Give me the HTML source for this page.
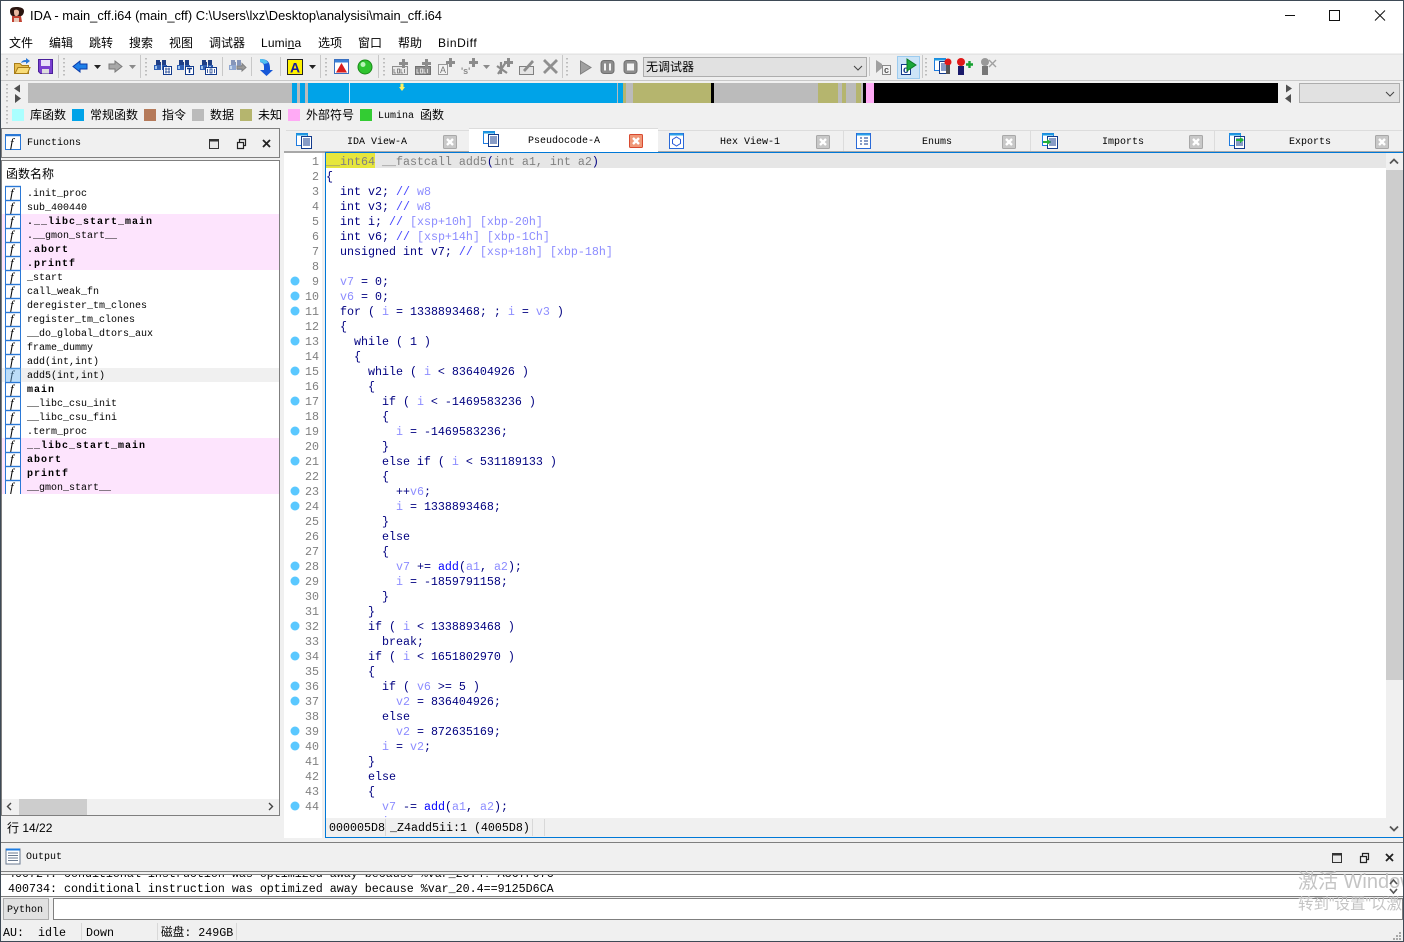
<!DOCTYPE html>
<html><head><meta charset="utf-8"><title>IDA</title>
<style>
html,body{margin:0;padding:0;width:1404px;height:942px;overflow:hidden;background:#f0f0f0}
body{position:relative;font-family:"Liberation Sans","Noto Sans CJK SC",sans-serif;font-size:12px;color:#000}
.a{position:absolute;white-space:pre}
.cjk{font-family:"Liberation Sans","Noto Sans CJK SC",sans-serif;font-size:12px;line-height:16px}
.m{font-family:"Liberation Mono","Noto Sans CJK SC",monospace}
.t10{font-size:10px;line-height:14px}
.code{font-family:"Liberation Mono",monospace;font-size:11.67px;line-height:15px;color:#000080}
.code i{font-style:normal;color:#8c8cff}
.code u{text-decoration:none;color:#4646ff}
.code b{font-weight:normal;color:#0000ff}
.code s{text-decoration:none;color:#808080}
.ln{font-family:"Liberation Mono",monospace;font-size:11.67px;line-height:15px;color:#808080;text-align:right;white-space:pre}
.f{font-family:"Liberation Mono",monospace;font-size:10px;line-height:14px;white-space:pre}
.f b{font-weight:bold;letter-spacing:1px}
.sw{position:absolute;top:109px;width:12px;height:12px}
.seg{position:absolute;top:83px;height:20px}
svg{position:absolute;left:0;top:0}
</style></head>
<body>
<!-- title + menu -->
<div class="a" style="left:0;top:0;width:1404px;height:53px;background:#fff"></div>
<div class="a" style="left:30px;top:8px;font-size:12.9px;line-height:16px">IDA - main_cff.i64 (main_cff) C:\Users\lxz\Desktop\analysisi\main_cff.i64</div>
<div class="a cjk" style="left:9px;top:35px">文件</div>
<div class="a cjk" style="left:49px;top:35px">编辑</div>
<div class="a cjk" style="left:89px;top:35px">跳转</div>
<div class="a cjk" style="left:129px;top:35px">搜索</div>
<div class="a cjk" style="left:169px;top:35px">视图</div>
<div class="a cjk" style="left:209px;top:35px">调试器</div>
<div class="a cjk" style="left:261px;top:35px;letter-spacing:.15px">Lumi<span style="text-decoration:underline">n</span>a</div>
<div class="a cjk" style="left:318px;top:35px">选项</div>
<div class="a cjk" style="left:358px;top:35px">窗口</div>
<div class="a cjk" style="left:398px;top:35px">帮助</div>
<div class="a cjk" style="left:438px;top:35px;letter-spacing:.6px">BinDiff</div>
<!-- toolbar -->
<div class="a" style="left:1px;top:54px;width:1402px;height:25px;background:#efefef;border-top:1px solid #e4e4e4;border-bottom:1px solid #c8c8c8"></div>
<div class="a" style="left:643px;top:57px;width:222px;height:18px;background:#e1e1e1;border:1px solid #adadad"></div>
<div class="a cjk" style="left:646px;top:59px">无调试器</div>
<div class="a" style="left:897px;top:56px;width:21px;height:21px;background:#cce4f7;border:1px solid #9ccbef"></div>
<!-- nav -->
<div class="seg" style="left:28px;width:1250px;background:#bbb"></div>
<div class="seg" style="left:292px;width:5px;background:#00a3e8"></div>
<div class="seg" style="left:300px;width:5px;background:#00a3e8"></div>
<div class="seg" style="left:308px;width:309px;background:#00a3e8"></div>
<div class="seg" style="left:349px;width:1px;background:#cfe8f5"></div>
<div class="seg" style="left:618px;width:5px;background:#00a3e8"></div>
<div class="seg" style="left:623px;width:3px;background:#b5b56e"></div>
<div class="seg" style="left:633px;width:78px;background:#b5b56e"></div>
<div class="seg" style="left:711px;width:3px;background:#000"></div>
<div class="seg" style="left:818px;width:20px;background:#b5b56e"></div>
<div class="seg" style="left:842px;width:4px;background:#b5b56e"></div>
<div class="seg" style="left:856px;width:5px;background:#b5b56e"></div>
<div class="seg" style="left:863px;width:3px;background:#000"></div>
<div class="seg" style="left:866px;width:8px;background:#ffaaf5"></div>
<div class="seg" style="left:874px;width:404px;background:#000"></div>
<div class="a" style="left:1299px;top:83px;width:99px;height:18px;background:#e1e1e1;border:1px solid #adadad"></div>
<!-- legend -->
<div class="sw" style="left:12px;background:#aaffff"></div><div class="a cjk" style="left:30px;top:107px">库函数</div>
<div class="sw" style="left:72px;background:#00a3e8"></div><div class="a cjk" style="left:90px;top:107px">常规函数</div>
<div class="sw" style="left:144px;background:#b57a5a"></div><div class="a cjk" style="left:162px;top:107px">指令</div>
<div class="sw" style="left:192px;background:#bbb"></div><div class="a cjk" style="left:210px;top:107px">数据</div>
<div class="sw" style="left:240px;background:#b5b56e"></div><div class="a cjk" style="left:258px;top:107px">未知</div>
<div class="sw" style="left:288px;background:#ffaaf5"></div><div class="a cjk" style="left:306px;top:107px">外部符号</div>
<div class="sw" style="left:360px;background:#33cc33"></div><div class="a m t10" style="left:378px;top:110px">Lumina</div><div class="a cjk" style="left:420px;top:107px">函数</div>

<!-- left panel -->
<div class="a" style="left:1px;top:128px;width:277px;height:28px;border:1px solid #7f7f7f;background:#f0f0f0"></div>
<div class="a m t10" style="left:27px;top:137px">Functions</div>
<div class="a" style="left:1px;top:160px;width:277px;height:654px;border:1px solid #7f7f7f;background:#fff"></div>
<div class="a cjk" style="left:6px;top:166px">函数名称</div>
<div class="a" style="left:2px;top:214px;width:277px;height:56px;background:#fde4fd"></div>
<div class="a" style="left:2px;top:368px;width:277px;height:14px;background:#f0f0f0"></div>
<div class="a" style="left:2px;top:438px;width:277px;height:56px;background:#fde4fd"></div>
<div class="a f" style="left:27px;top:188px">.init_proc
sub_400440
<b>.__libc_start_main</b>
.__gmon_start__
<b>.abort</b>
<b>.printf</b>
_start
call_weak_fn
deregister_tm_clones
register_tm_clones
__do_global_dtors_aux
frame_dummy
add(int,int)
add5(int,int)
<b>main</b>
__libc_csu_init
__libc_csu_fini
.term_proc
<b>__libc_start_main</b>
<b>abort</b>
<b>printf</b>
__gmon_start__</div>
<div class="a" style="left:2px;top:799px;width:277px;height:16px;background:#f0f0f0"></div>
<div class="a" style="left:19px;top:799px;width:68px;height:16px;background:#cdcdcd"></div>
<div class="a cjk" style="left:7px;top:820px">行 14/22</div>

<!-- tabs -->
<div class="a" style="left:286px;top:130px;width:1116px;height:21px;background:#f0f0f0;border-top:1px solid #dcdcdc"></div>
<div class="a" style="left:284px;top:151px;width:1120px;height:1px;background:#a8a8a8"></div>
<div class="a" style="left:469px;top:128px;width:189px;height:24px;background:#fff;border-top:1px solid #dcdcdc"></div>
<div class="a" style="left:843px;top:131px;width:1px;height:20px;background:#dcdcdc"></div>
<div class="a" style="left:1030px;top:131px;width:1px;height:20px;background:#dcdcdc"></div>
<div class="a" style="left:1214px;top:131px;width:1px;height:20px;background:#dcdcdc"></div>
<div class="a m t10" style="left:347px;top:136px">IDA View-A</div>
<div class="a m t10" style="left:528px;top:135px">Pseudocode-A</div>
<div class="a m t10" style="left:720px;top:136px">Hex View-1</div>
<div class="a m t10" style="left:922px;top:136px">Enums</div>
<div class="a m t10" style="left:1102px;top:136px">Imports</div>
<div class="a m t10" style="left:1289px;top:136px">Exports</div>

<!-- code pane -->
<div class="a" style="left:326px;top:152px;width:1078px;height:1px;background:#0078d7"></div>
<div class="a" style="left:284px;top:152px;width:41px;height:1px;background:#a8a8a8"></div>
<div class="a" style="left:284px;top:153px;width:38px;height:685px;background:#fff"></div>
<div class="a" style="left:325px;top:152px;width:1px;height:686px;background:#0078d7"></div>
<div class="a" style="left:326px;top:153px;width:1077px;height:665px;background:#fff"></div>
<div class="a" style="left:326px;top:153px;width:1060px;height:15px;background:#e6e6e6"></div>
<div class="a" style="left:326px;top:153px;width:49px;height:15px;background:#e6e63c"></div>
<div class="a" style="left:1386px;top:153px;width:17px;height:684px;background:#f0f0f0"></div>
<div class="a" style="left:1386px;top:170px;width:17px;height:510px;background:#cdcdcd"></div>
<div class="a" style="left:326px;top:818px;width:1060px;height:19px;background:#f0f0f0"></div>
<div class="a" style="left:326px;top:837px;width:1078px;height:1px;background:#0078d7"></div>
<div class="a" style="left:1403px;top:152px;width:1px;height:686px;background:#0078d7"></div>
<div class="a" style="left:385px;top:819px;width:1px;height:17px;background:#d8d8d8"></div>
<div class="a" style="left:532px;top:819px;width:1px;height:17px;background:#d8d8d8"></div>
<div class="a" style="left:544px;top:819px;width:1px;height:17px;background:#d8d8d8"></div>
<div class="a m" style="left:329px;top:821px;font-size:11.67px;line-height:15px;color:#000">000005D8</div>
<div class="a m" style="left:390px;top:821px;font-size:11.67px;line-height:15px;color:#000">_Z4add5ii:1 (4005D8)</div>

<div class="a ln" style="left:284px;top:155px;width:35px;height:663px;overflow:hidden">1
2
3
4
5
6
7
8
9
10
11
12
13
14
15
16
17
18
19
20
21
22
23
24
25
26
27
28
29
30
31
32
33
34
35
36
37
38
39
40
41
42
43
44</div>
<div class="a code" style="left:326px;top:155px;width:1060px;height:663px;overflow:hidden"><s>__int64 __fastcall add5</s>(<s>int a1, int a2</s>)
{
  int v2; <u>//</u> <i>w8</i>
  int v3; <u>//</u> <i>w8</i>
  int i; <u>//</u> <i>[xsp+10h] [xbp-20h]</i>
  int v6; <u>//</u> <i>[xsp+14h] [xbp-1Ch]</i>
  unsigned int v7; <u>//</u> <i>[xsp+18h] [xbp-18h]</i>

  <i>v7</i> = 0;
  <i>v6</i> = 0;
  for ( <i>i</i> = 1338893468; ; <i>i</i> = <i>v3</i> )
  {
    while ( 1 )
    {
      while ( <i>i</i> &lt; 836404926 )
      {
        if ( <i>i</i> &lt; -1469583236 )
        {
          <i>i</i> = -1469583236;
        }
        else if ( <i>i</i> &lt; 531189133 )
        {
          ++<i>v6</i>;
          <i>i</i> = 1338893468;
        }
        else
        {
          <i>v7</i> += <b>add</b>(<i>a1</i>, <i>a2</i>);
          <i>i</i> = -1859791158;
        }
      }
      if ( <i>i</i> &lt; 1338893468 )
        break;
      if ( <i>i</i> &lt; 1651802970 )
      {
        if ( <i>v6</i> &gt;= 5 )
          <i>v2</i> = 836404926;
        else
          <i>v2</i> = 872635169;
        <i>i</i> = <i>v2</i>;
      }
      else
      {
        <i>v7</i> -= <b>add</b>(<i>a1</i>, <i>a2</i>);
        <i>i</i></div>

<!-- output -->
<div class="a" style="left:0;top:842px;width:1403px;height:28px;border-top:1px solid #7f7f7f;border-bottom:1px solid #7f7f7f;background:#f0f0f0"></div>
<div class="a m t10" style="left:26px;top:851px;font-size:10px">Output</div>
<div class="a" style="left:0;top:874px;width:1403px;height:21px;border-top:1px solid #7f7f7f;border-bottom:1px solid #7f7f7f;background:#fff;overflow:hidden">
<div class="a code" style="left:8px;top:-8px;color:#000">400724: conditional instruction was optimized away because %var_20.4!=A867F07C
400734: conditional instruction was optimized away because %var_20.4==9125D6CA</div></div>
<div class="a" style="left:3px;top:898px;width:44px;height:20px;background:#e1e1e1;border:1px solid #adadad"></div>
<div class="a m t10" style="left:7px;top:904px">Python</div>
<div class="a" style="left:53px;top:898px;width:1348px;height:20px;background:#fff;border:1px solid #7f7f7f"></div>
<div class="a m" style="left:3px;top:926px;font-size:11.67px;line-height:14px">AU:  idle</div>
<div class="a m" style="left:86px;top:926px;font-size:11.67px;line-height:14px">Down</div>
<div class="a m" style="left:161px;top:926px;font-size:11.67px;line-height:14px">磁盘: 249GB</div>
<div class="a" style="left:81px;top:923px;width:1px;height:17px;background:#d8d8d8"></div>
<div class="a" style="left:157px;top:923px;width:1px;height:17px;background:#d8d8d8"></div>
<div class="a" style="left:236px;top:923px;width:1px;height:17px;background:#d8d8d8"></div>
<!-- watermark -->
<div class="a" style="left:1298px;top:869px;width:106px;overflow:hidden;font-size:20px;line-height:26px;color:#c4c4c4;font-family:'Liberation Sans','Noto Sans CJK SC',sans-serif">激活 Windows</div>
<div class="a" style="left:1298px;top:896px;width:106px;overflow:hidden;font-size:15.5px;line-height:18px;color:#c4c4c4;font-family:'Liberation Sans','Noto Sans CJK SC',sans-serif">转到"设置"以激活</div>

<svg width="1404" height="942" viewBox="0 0 1404 942" fill="none">
<defs>
<symbol id="fn" viewBox="0 0 16 14" width="16" height="14" overflow="visible">
<rect width="16" height="14" fill="#fff"/>
<path d="M.5 0V14M15.5 0V14" stroke="#2a78d6"/><path d="M0 .5H16" stroke="#2a78d6" stroke-width="1.4"/>
<text x="5" y="11.5" font-family="Liberation Serif" font-style="italic" font-size="13" fill="#000">f</text>
</symbol>
<symbol id="doc" viewBox="0 0 16 16" width="16" height="16" overflow="visible">
<rect x=".5" y=".5" width="11" height="12" fill="#fff" stroke="#1d7be0"/><path d="M0 1.5H12" stroke="#1d9be0" stroke-width="2"/>
<rect x="5.5" y="3.5" width="10" height="12" fill="#fff" stroke="#123a8c"/><path d="M7 6H14M7 8H14M7 10H14M7 12H14" stroke="#123a8c"/>
</symbol>
<symbol id="cl" viewBox="0 0 14 14" width="14" height="14" overflow="visible">
<rect x=".5" y=".5" width="13" height="13" rx="1" fill="#c8c8c8" stroke="#a8a8a8"/><path d="M4 4L10 10M10 4L4 10" stroke="#fff" stroke-width="2.4"/>
</symbol>
<symbol id="bin" viewBox="0 0 18 18" width="18" height="18" overflow="visible">
<path d="M2 2H6V4H7V7H2ZM8 2H12V7H8Z" fill="#1f3f86"/><path d="M0 7H7V12H0ZM8 7H13V12H8Z" fill="#2f5fb4"/><path d="M1 8h2v3H1zM9 8h2v3H9z" fill="#9fc4ee"/>
</symbol>
<symbol id="plus" viewBox="0 0 8 8" width="8" height="8" overflow="visible"><path d="M3 0H6V3H9V6H6V9H3V6H0V3H3Z" fill="#8c8c8c"/></symbol>
<symbol id="grip" viewBox="0 0 3 20" width="3" height="20" overflow="visible">
<path d="M0 1h2v1.5H0zM0 5h2v1.5H0zM0 9h2v1.5H0zM0 13h2v1.5H0zM0 17h2v1.5H0z" fill="#bdbdbd"/>
</symbol>
</defs>
<!-- window border -->
<rect x=".5" y=".5" width="1403" height="941" stroke="#3e4a56"/>
<!-- title icon -->
<path d="M10 11C10 7 14 7 17 7S24 8 24 11 22 16 21 16H13C11 16 10 14 10 11Z" fill="#2a1510"/>
<path d="M14 11C14 9 19 9 19 12S18 16 16 16 14 13 14 11Z" fill="#e8b8a0"/>
<path d="M12 16H21L22 22H12Z" fill="#c04030"/><path d="M14 18h5v4h-5z" fill="#e8c8b8"/>
<!-- caption -->
<path d="M1285 15.5H1295" stroke="#111"/>
<rect x="1329.500" y="10.500" width="10" height="10" stroke="#111"/>
<path d="M1375 10.500L1385 20.500M1385 10.500L1375 20.500" stroke="#111"/>
<!-- grips -->
<use href="#grip" x="6" y="57"/><use href="#grip" x="63" y="57"/><use href="#grip" x="145" y="57"/><use href="#grip" x="325" y="57"/><use href="#grip" x="383" y="57"/><use href="#grip" x="566" y="57"/><use href="#grip" x="925" y="57"/>
<use href="#grip" x="6" y="83"/><use href="#grip" x="6" y="105"/>
<path d="M58.500 55V78M140.500 55V78M320.500 55V78M378.500 55V78M562.500 55V78M869.500 57V76M222.500 57V76M251.500 57V76M280.500 57V76M922.500 55V78" stroke="#c8c8c8"/>
<!-- open -->
<path d="M14.500 73.500V63.500H20L22 65.500H28.500V73.500Z" fill="#e8bf50" stroke="#a87d18"/><path d="M15 73.500L18 67.500H30L27.500 73.500Z" fill="#f8dc78" stroke="#a87d18"/><path d="M21 63C22 60 25 60 26 60V58L30 61L26 64V62C25 62 23 62 21 63Z" fill="#2a78d6"/>
<!-- save -->
<path d="M38.500 59.500H52.500V73.500H40.500L38.500 71.500Z" fill="#7a3fd0" stroke="#4a1f9a"/><rect x="41" y="60" width="9" height="6" fill="#e8e0f8"/><rect x="42" y="69" width="7" height="4.500" fill="#ddd"/>
<!-- back/forward -->
<path d="M73 66.500L80 61V64H87V69H80V72Z" fill="#1e7fe8" stroke="#0a3aa8"/>
<path d="M94 65H101L97.500 69Z" fill="#222"/>
<path d="M122 66.500L115 61V64H109V69H115V72Z" fill="#a8a8a8" stroke="#7a7a7a"/>
<path d="M129 65H136L132.500 69Z" fill="#8a8a8a"/>
<!-- binoculars -->
<use href="#bin" x="154" y="58"/><rect x="163.500" y="66.500" width="8" height="8" fill="#fff" stroke="#123a8c"/><path d="M165 69H170M165 72H170M166 67.500V73.500M169 67.500V73.500" stroke="#123a8c" stroke-width=".8"/>
<use href="#bin" x="177" y="58"/><rect x="185.500" y="66.500" width="8" height="8" fill="#fff" stroke="#123a8c"/><path d="M187 68.500H192M189.500 68.500V73" stroke="#123a8c" stroke-width="1.400"/>
<use href="#bin" x="200" y="58"/><rect x="205.500" y="67.500" width="11" height="7" fill="#fff" stroke="#123a8c"/><path d="M207.500 69V73M210 69h2v4h-2zM214.500 69V73" stroke="#123a8c" stroke-width=".8"/>
<g opacity=".5"><use href="#bin" x="229" y="58"/></g><path d="M237 66H242V63.500L246 67.500L242 71V69H237Z" fill="#9a9a9a" stroke="#808080"/>
<!-- jump -->
<path d="M260 59C266 59 270 61 270 68V70H273L266.500 76L260 70H264V67C264 64 263 63 260 62Z" fill="#1658d8"/><path d="M260 59C264 59 267 60 268 63L264 64C263 63 262 62 260 62Z" fill="#4fc0f0"/>
<!-- A -->
<rect x="287.500" y="59.500" width="15" height="15" fill="#fff200" stroke="#222"/><text x="290" y="72.500" font-family="Liberation Sans" font-weight="bold" font-size="14" fill="#1a1a9a">A</text>
<path d="M309 65H316L312.500 69Z" fill="#222"/>
<!-- red tri window -->
<rect x="334.500" y="59.500" width="14" height="14" fill="#fff" stroke="#3a70c0"/><path d="M335 60H348V62.500H335Z" fill="#3a80d8"/><path d="M341.500 63L347 72.500H336Z" fill="#d81e1e"/>
<!-- green -->
<circle cx="365" cy="67" r="7" fill="#2fc42f" stroke="#1a8a1a"/><circle cx="363" cy="64.500" r="2.500" fill="#b8f5b8"/>
<!-- code data etc -->
<rect x="392.500" y="66.500" width="15" height="8" fill="#e8e8e8" stroke="#8c8c8c"/><path d="M394 69v4h2M397.500 69h2v4h-2zM401 69v4h2M404.500 69v4" stroke="#707070" stroke-width=".8"/><use href="#plus" x="399" y="59"/>
<rect x="415.500" y="66.500" width="15" height="8" fill="#8c8c8c" stroke="#707070"/><path d="M417 69v4h2M420.500 69h2v4h-2zM424 69v4h2M427.500 69v4" stroke="#eee" stroke-width=".8"/><use href="#plus" x="422" y="59"/>
<rect x="438.500" y="64.500" width="9" height="10" fill="#f4f4f4" stroke="#999"/><text x="440" y="73" font-family="Liberation Sans" font-size="9" fill="#777">A</text><use href="#plus" x="446" y="58"/>
<text x="461" y="74" font-family="Liberation Sans" font-weight="bold" font-size="9" fill="#8a8a8a">'s'</text><use href="#plus" x="469" y="58"/>
<path d="M483 65H490L486.500 69Z" fill="#8a8a8a"/>
<path d="M498 74L506 62M497 66L507 73M501 62V74" stroke="#8a8a8a" stroke-width="2.200"/><use href="#plus" x="504" y="58"/>
<rect x="519.500" y="66.500" width="14" height="8" fill="#e4e4e4" stroke="#808080"/><path d="M523 70L532 60L534 62L525 72Z" fill="#8c8c8c"/>
<path d="M544 60L557 73M557 60L544 73" stroke="#8f8f8f" stroke-width="2.800"/>
<!-- play etc -->
<path d="M580.500 61L591 67.500L580.500 74Z" fill="#a0a0a0" stroke="#808080"/>
<rect x="601" y="60.500" width="13" height="13" rx="3" fill="#8c8c8c" stroke="#707070"/><path d="M605 63.500V70.500M610 63.500V70.500" stroke="#f4f4f4" stroke-width="2"/>
<rect x="624" y="60.500" width="13" height="13" rx="3" fill="#8c8c8c" stroke="#707070"/><rect x="627" y="63.500" width="7" height="7" fill="#f4f4f4"/>
<path d="M854 66L858 70L862 66" stroke="#444"/>
<path d="M1386 92L1390 96L1394 92" stroke="#444"/>
<!-- c arrows -->
<path d="M876 60L882 64V61L882 68L876 73Z" fill="#a0a0a0"/><rect x="882.500" y="65.500" width="8" height="9" fill="#f4f4f4" stroke="#8c8c8c"/><text x="884" y="73" font-family="Liberation Sans" font-weight="bold" font-size="9" fill="#555">c</text>
<rect x="901.500" y="64.500" width="9" height="10" fill="#fff" stroke="#123a8c"/><text x="903" y="73" font-family="Liberation Sans" font-weight="bold" font-size="10" fill="#123a8c">c</text><path d="M907 59L916 65L907 71Z" fill="#1aa83a" stroke="#0c7a24"/>
<!-- breakpoints -->
<use href="#doc" x="934" y="58"/><circle cx="948" cy="62" r="3.500" fill="#e01818"/><rect x="946" y="65" width="4" height="9" fill="#555"/>
<circle cx="961" cy="62" r="4" fill="#e01818"/><rect x="958" y="66" width="6" height="9" fill="#1a1a6a"/><path d="M966 64.500H973M969.500 61V68" stroke="#15a030" stroke-width="2.400"/>
<circle cx="985" cy="62" r="4" fill="#999"/><rect x="982" y="66" width="6" height="9" fill="#777"/><path d="M989 60L996 67M996 60L989 67" stroke="#a0a0a0" stroke-width="1.400"/>
<!-- nav arrows -->
<path d="M20 84.500L14 88.500L20 92.500Z M15 94L21 98.500L15 103Z" fill="#505050"/>
<path d="M1286 84.500L1292 88.500L1286 92.500Z M1291 94L1285 98.500L1291 103Z" fill="#505050"/>
<path d="M400.500 83.500H403.500V87H405L402 91L399 87H400.500Z" fill="#fff060"/>
<!-- fn icons -->
<rect x="5.500" y="134.500" width="15" height="15" fill="#fff" stroke="#2a78d6"/><path d="M5 135.500H21" stroke="#2a78d6" stroke-width="1.500"/><text x="10" y="147" font-family="Liberation Serif" font-style="italic" font-size="13" fill="#000">f</text>
<use href="#fn" x="5" y="186"/><use href="#fn" x="5" y="200"/><use href="#fn" x="5" y="214"/><use href="#fn" x="5" y="228"/><use href="#fn" x="5" y="242"/><use href="#fn" x="5" y="256"/><use href="#fn" x="5" y="270"/><use href="#fn" x="5" y="284"/><use href="#fn" x="5" y="298"/><use href="#fn" x="5" y="312"/><use href="#fn" x="5" y="326"/><use href="#fn" x="5" y="340"/><use href="#fn" x="5" y="354"/><use href="#fn" x="5" y="368"/><use href="#fn" x="5" y="382"/><use href="#fn" x="5" y="396"/><use href="#fn" x="5" y="410"/><use href="#fn" x="5" y="424"/><use href="#fn" x="5" y="438"/><use href="#fn" x="5" y="452"/><use href="#fn" x="5" y="466"/><use href="#fn" x="5" y="480"/>
<rect x="5" y="368" width="16" height="14" fill="#6ab4f0" opacity=".45"/>
<!-- panel buttons -->
<rect x="209.500" y="139.500" width="9" height="9" fill="#e8e8e8" stroke="#333"/><path d="M209 140.500H219" stroke="#333" stroke-width="2"/>
<path d="M237.500 142.500V148.500H243.500V142.500ZM239.500 142V139.500H245.500V145.500H244" stroke="#222" stroke-width="1.200"/>
<path d="M263 140L270 147M270 140L263 147" stroke="#222" stroke-width="1.800"/>
<path d="M11 803L7.500 806.500L11 810" stroke="#444" stroke-width="1.400"/><path d="M269 803L272.500 806.500L269 810" stroke="#444" stroke-width="1.400"/>
<!-- tabs -->
<use href="#doc" x="296" y="133"/><use href="#doc" x="483" y="131"/>
<rect x="669.500" y="133.500" width="14" height="15" fill="#fff" stroke="#2a6ad8"/><path d="M670 134.500H683" stroke="#2aa0e8" stroke-width="2"/><path d="M676.500 137L680.500 139.500V143.500L676.500 146L672.500 143.500V139.500Z" stroke="#2a5ad8"/>
<rect x="856.500" y="133.500" width="14" height="15" fill="#fff" stroke="#2a6ad8"/><path d="M857 134.500H870" stroke="#2aa0e8" stroke-width="2"/><path d="M860 138h2M860 141h2M860 144h2M864 138h4M864 141h4M864 144h4" stroke="#123a8c"/>
<use href="#doc" x="1042" y="133"/><path d="M1043 141H1047V139L1051 142L1047 145V143H1043Z" fill="#22b03a"/>
<use href="#doc" x="1229" y="133"/><path d="M1236 139H1240V137L1244 140L1240 143V141H1236Z" fill="#22b03a"/>
<use href="#cl" x="443" y="135"/>
<rect x="629.500" y="134.500" width="13" height="13" rx="1" fill="#f09878" stroke="#d84a30"/><path d="M633 138L639 144M639 138L633 144" stroke="#fff" stroke-width="2.400"/>
<use href="#cl" x="816" y="135"/><use href="#cl" x="1002" y="135"/><use href="#cl" x="1189" y="135"/><use href="#cl" x="1375" y="135"/>
<!-- dots -->
<g fill="#5ac8ff"><circle cx="295" cy="281" r="4.500"/><circle cx="295" cy="296" r="4.500"/><circle cx="295" cy="311" r="4.500"/><circle cx="295" cy="341" r="4.500"/><circle cx="295" cy="371" r="4.500"/><circle cx="295" cy="401" r="4.500"/><circle cx="295" cy="431" r="4.500"/><circle cx="295" cy="461" r="4.500"/><circle cx="295" cy="491" r="4.500"/><circle cx="295" cy="506" r="4.500"/><circle cx="295" cy="566" r="4.500"/><circle cx="295" cy="581" r="4.500"/><circle cx="295" cy="626" r="4.500"/><circle cx="295" cy="656" r="4.500"/><circle cx="295" cy="686" r="4.500"/><circle cx="295" cy="701" r="4.500"/><circle cx="295" cy="731" r="4.500"/><circle cx="295" cy="746" r="4.500"/><circle cx="295" cy="806" r="4.500"/></g>
<path d="M1390 163.500L1394 159.500L1398 163.500" stroke="#555" stroke-width="1.800"/>
<path d="M1390 826.500L1394 830.500L1398 826.500" stroke="#555" stroke-width="1.800"/>
<!-- output icons -->
<rect x="6" y="849" width="14" height="15" fill="#fff" stroke="#6a7a90"/><path d="M6 849.500H20" stroke="#1d7be0" stroke-width="2"/><path d="M8 853H18M8 855.500H18M8 858H18M8 860.500H18" stroke="#6a7a90"/>
<rect x="1332.500" y="853.500" width="9" height="9" fill="#e8e8e8" stroke="#333"/><path d="M1332 854.500H1342" stroke="#333" stroke-width="2"/>
<path d="M1360.500 856.500V862.500H1366.500V856.500ZM1362.500 856V853.500H1368.500V859.500H1367" stroke="#222" stroke-width="1.200"/>
<path d="M1386 854L1393 861M1393 854L1386 861" stroke="#222" stroke-width="1.800"/>
<path d="M1390 884L1393.500 880L1397 884" stroke="#555" stroke-width="1.600"/>
<path d="M1390 889L1393.500 893L1397 889" stroke="#555" stroke-width="1.600"/>
<!-- size grip -->
<path d="M1399 932h2v2h-2zM1396 935h2v2h-2zM1399 935h2v2h-2zM1393 938h2v2h-2zM1396 938h2v2h-2zM1399 938h2v2h-2z" fill="#a8a8a8"/>
</svg>
</body></html>
